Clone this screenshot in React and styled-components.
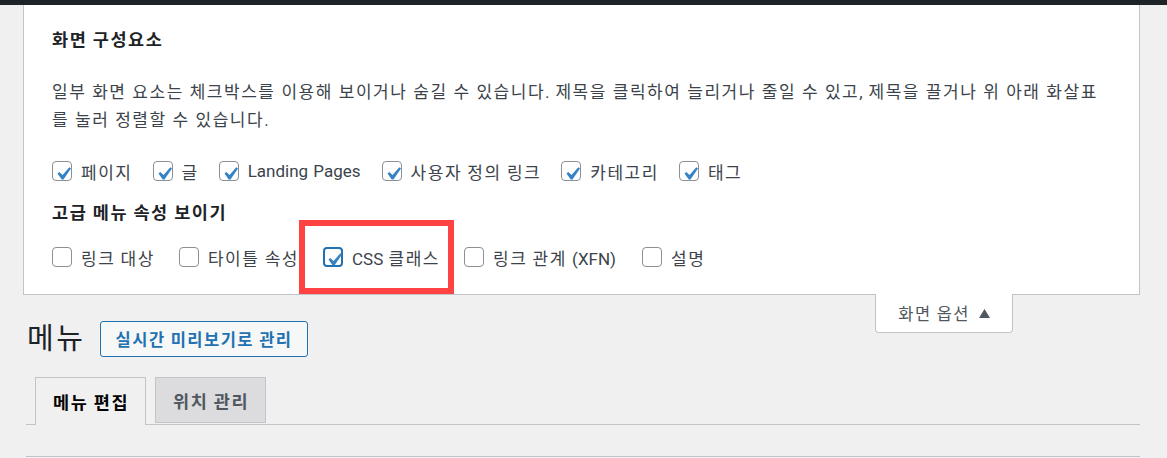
import React from 'react';
import styled, { createGlobalStyle } from 'styled-components';

const GlobalStyle = createGlobalStyle`
  body {
    margin: 0;
    background: #f0f0f1;
    font-family: Roboto, "Noto Sans CJK KR", sans-serif;
    color: #3c434a;
    word-spacing: 1px;
  }
`;

// Hangul runs get a little extra advance to match the wider reference face
const Han = styled.span`
  letter-spacing: 0.09em;
`;

const T = ({ children }) => (
  <span>
    {String(children)
      .split(/([가-힣]+)/)
      .map((part, i) => (/[가-힣]/.test(part) ? <Han key={i}>{part}</Han> : part))}
  </span>
);

const AdminBar = styled.div`
  height: 5px;
  background: #1d2327;
`;

const Panel = styled.div`
  margin: 0 27px 0 23px;
  background: #fff;
  border: 1px solid #c3c4c7;
  border-top: none;
  padding: 23px 28px 23px 28px;
`;

const Legend = styled.div`
  font-size: 17.5px;
  font-weight: 700;
  line-height: 24px;
  color: #1d2327;
  margin-top: ${(p) => p.$top || 0}px;
`;

const Intro = styled.p`
  margin: 26px 0 0;
  font-size: 17px;
  line-height: 28px;
  word-spacing: 1.6px;
`;

const CheckRow = styled.div`
  display: flex;
  align-items: center;
  height: 28px;
  margin-top: ${(p) => p.$top}px;
`;

const Item = styled.label`
  position: relative;
  display: flex;
  align-items: center;
  gap: 9px;
  margin-right: ${(p) => p.$space}px;
  font-size: 17px;
  color: #3c434a;
  white-space: nowrap;
`;

const Highlight = styled.span`
  position: absolute;
  left: -24px;
  right: -14px;
  top: -25px;
  bottom: -24px;
  border: 6.5px solid #ff4242;
  pointer-events: none;
`;

const Box = styled.span`
  position: relative;
  flex: none;
  box-sizing: border-box;
  width: 20px;
  height: 20px;
  border: ${(p) => (p.$focus ? '2px solid #2271b1' : '1px solid #8c8f94')};
  border-radius: 4px;
  background: #fff;

  svg {
    position: absolute;
    left: ${(p) => (p.$focus ? -4 : -3)}px;
    top: ${(p) => (p.$focus ? -2 : -1)}px;
    width: 26px;
    height: 26px;
  }
`;

const Check = ({ checked, focus }) => (
  <Box $focus={focus}>
    {checked && (
      <svg viewBox="0 0 20 20">
        <path d="M14.83 4.89l1.34.94-5.81 8.38H9.02L5.78 9.67l1.34-1.25 2.57 2.4z" fill="#3582c4" />
      </svg>
    )}
  </Box>
);

const MetaLinks = styled.div`
  float: right;
  margin: -1px 154px 0 0;
`;

const MetaTab = styled.button`
  display: flex;
  align-items: center;
  gap: 9px;
  height: 39px;
  padding: 0 22px 0 22px;
  background: #fff;
  border: 1px solid #c3c4c7;
  border-top: none;
  border-radius: 0 0 4px 4px;
  font-family: inherit;
  word-spacing: inherit;
  font-size: 16.5px;
  color: #50575e;

  svg {
    width: 11px;
    height: 9px;
  }
`;

const Wrap = styled.div`
  margin: 0 27px 0 26px;
`;

const TitleRow = styled.div`
  display: flex;
  align-items: center;
  gap: 14px;
  padding-top: 26px;
  margin-left: 1px;
`;

const Heading = styled.h1`
  margin: 0;
  font-size: 29px;
  font-weight: 400;
  line-height: 36px;
  color: #1d2327;
`;

const LiveButton = styled.a`
  display: inline-flex;
  align-items: center;
  height: 36px;
  box-sizing: border-box;
  padding: 0 15px 0 15px;
  border: 1px solid #2271b1;
  border-radius: 3px;
  background: #f6f7f7;
  color: #2271b1;
  font-size: 16.5px;
  font-weight: 700;
  text-decoration: none;
`;

const Tabs = styled.div`
  display: flex;
  align-items: flex-end;
  gap: 9px;
  margin-top: 20px;
  padding-left: 9px;
  border-bottom: 1px solid #c3c4c7;
  clear: both;
`;

const Tab = styled.a`
  display: flex;
  align-items: center;
  box-sizing: border-box;
  height: ${(p) => (p.$active ? 48 : 46)}px;
  padding: 0 16px 0 17px;
  margin-bottom: ${(p) => (p.$active ? -1 : 1)}px;
  border: 1px solid #c3c4c7;
  border-bottom: ${(p) => (p.$active ? 'none' : '1px solid #c3c4c7')};
  background: ${(p) => (p.$active ? '#f0f0f1' : '#dcdcde')};
  color: ${(p) => (p.$active ? '#000' : '#50575e')};
  font-size: 17.5px;
  font-weight: 700;
  text-decoration: none;
`;

const EditBox = styled.div`
  margin-top: 31px;
  height: 20px;
  border-top: 1px solid #c3c4c7;
`;

const first = ['페이지', '글', 'Landing Pages', '사용자 정의 링크', '카테고리', '태그'];

const advanced = [
  { label: '링크 대상', checked: false },
  { label: '타이틀 속성', checked: false },
  { label: 'CSS 클래스', checked: true, marked: true },
  { label: '링크 관계 (XFN)', checked: false },
  { label: '설명', checked: false },
];

export default function App() {
  return (
    <>
      <GlobalStyle />
      <AdminBar />
      <Panel>
        <Legend><T>화면 구성요소</T></Legend>
        <Intro>
          <T>일부 화면 요소는 체크박스를 이용해 보이거나 숨길 수 있습니다. 제목을 클릭하여 늘리거나 줄일 수 있고, 제목을 끌거나 위 아래 화살표</T>
          <br />
          <T>를 눌러 정렬할 수 있습니다.</T>
        </Intro>
        <CheckRow $top={23}>
          {first.map((label) => (
            <Item key={label} $space={label === 'Landing Pages' ? 21 : 20}>
              <Check checked />
              <T>{label}</T>
            </Item>
          ))}
        </CheckRow>
        <Legend $top={16}><T>고급 메뉴 속성 보이기</T></Legend>
        <CheckRow $top={18}>
          {advanced.map((it) => (
            <Item key={it.label} $space={it.label.endsWith(')') ? 26 : 24}>
              <Check checked={it.checked} focus={it.marked} />
              <T>{it.label}</T>
              {it.marked && <Highlight />}
            </Item>
          ))}
        </CheckRow>
      </Panel>
      <MetaLinks>
        <MetaTab>
          <T>화면 옵션</T>
          <svg viewBox="0 0 11 9">
            <polygon points="5.5,0 11,9 0,9" fill="#50575e" />
          </svg>
        </MetaTab>
      </MetaLinks>
      <Wrap>
        <TitleRow>
          <Heading><T>메뉴</T></Heading>
          <LiveButton href="#"><T>실시간 미리보기로 관리</T></LiveButton>
        </TitleRow>
        <Tabs>
          <Tab $active href="#"><T>메뉴 편집</T></Tab>
          <Tab href="#"><T>위치 관리</T></Tab>
        </Tabs>
        <EditBox />
      </Wrap>
    </>
  );
}
